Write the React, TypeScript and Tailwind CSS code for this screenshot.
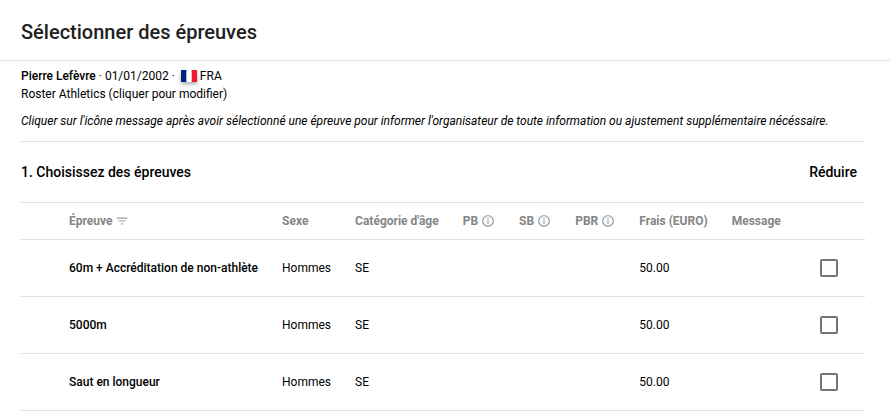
import { useState } from "react";
import { MdFilterList, MdInfoOutline } from "react-icons/md";

const events = [
  { id: "60m", name: "60m + Accréditation de non-athlète", gender: "Hommes", age: "SE", fee: "50.00" },
  { id: "5000m", name: "5000m", gender: "Hommes", age: "SE", fee: "50.00" },
  { id: "long-jump", name: "Saut en longueur", gender: "Hommes", age: "SE", fee: "50.00" },
];

const columns = [
  { label: "Épreuve", icon: "filter" },
  { label: "Sexe" },
  { label: "Catégorie d'âge" },
  { label: "PB", icon: "info" },
  { label: "SB", icon: "info" },
  { label: "PBR", icon: "info" },
  { label: "Frais (EURO)" },
  { label: "Message" },
];

function FrenchFlag() {
  return (
    <svg viewBox="0 0 16 12" className="h-3 w-4 shadow-[0_2px_4px_rgba(0,0,0,0.35)]" aria-hidden="true">
      <rect width="16" height="12" fill="#fff" />
      <rect width="5.33" height="12" fill="#00267f" />
      <rect x="10.67" width="5.33" height="12" fill="#f31830" />
    </svg>
  );
}

export default function App() {
  const [open, setOpen] = useState(true);
  const [selected, setSelected] = useState<string[]>([]);

  const toggle = (id: string) =>
    setSelected((prev) => (prev.includes(id) ? prev.filter((e) => e !== id) : [...prev, id]));

  return (
    <div className="bg-white font-[Roboto,sans-serif] text-xs text-black">
      <header className="border-b border-[#e0e0e0] px-[21px] pt-[18px] pb-3.5">
        <h1 className="text-xl leading-7 font-medium text-[#212121]">Sélectionner des épreuves</h1>
      </header>

      <main className="pr-[25px] pl-[21px]">
        {/* Athlete */}
        <section className="border-b border-[#e0e0e0] pt-1.5 pb-[11px] leading-[18px]">
          <div className="flex items-center">
            <p className="mr-1.5">
              <span className="font-medium">Pierre Lefèvre</span> · 01/01/2002 ·
            </p>
            <FrenchFlag />
            <span className="ml-[3px]">FRA</span>
          </div>
          <button type="button" className="block cursor-pointer">
            Roster Athletics (cliquer pour modifier)
          </button>
          <p className="mt-[9px] italic">
            Cliquer sur l'icône message après avoir sélectionné une épreuve pour informer l'organisateur de toute
            information ou ajustement supplémentaire nécéssaire.
          </p>
        </section>

        {/* Events */}
        <section>
          <div className="flex h-[60px] items-center justify-between pr-2 text-sm font-medium">
            <h2>1. Choisissez des épreuves</h2>
            <button type="button" aria-expanded={open} className="cursor-pointer" onClick={() => setOpen(!open)}>
              Réduire
            </button>
          </div>

          {open && (
            <table className="w-full border-t border-[#e0e0e0] text-left whitespace-nowrap">
              <thead>
                <tr className="h-[37px] border-b border-[#e0e0e0] text-[#858585]">
                  <td className="min-w-12 p-0" />
                  {columns.map((col) => (
                    <th key={col.label} scope="col" className="p-0 pr-6 font-bold">
                      <span className="flex items-center gap-[3px]">
                        {col.label}
                        {col.icon === "filter" && <MdFilterList className="size-[14px] text-[#9aa0a6]" />}
                        {col.icon === "info" && <MdInfoOutline className="size-[14px] text-[#8a9199]" />}
                      </span>
                    </th>
                  ))}
                  <td className="w-full p-0" />
                </tr>
              </thead>
              <tbody>
                {events.map((event) => (
                  <tr key={event.id} className="h-[57px] border-b border-[#e0e0e0]">
                    <td className="p-0" />
                    <td className="p-0 pr-6 font-medium">
                      <label htmlFor={event.id}>{event.name}</label>
                    </td>
                    <td className="p-0 pr-6">{event.gender}</td>
                    <td className="p-0 pr-6">{event.age}</td>
                    <td />
                    <td />
                    <td />
                    <td className="p-0 pr-6">{event.fee}</td>
                    <td />
                    <td className="p-0 pr-[27px]">
                      <input
                        id={event.id}
                        type="checkbox"
                        checked={selected.includes(event.id)}
                        onChange={() => toggle(event.id)}
                        className="ml-auto block size-[18px] appearance-none rounded-xs border-2 border-[#757575] checked:bg-[#757575]"
                      />
                    </td>
                  </tr>
                ))}
              </tbody>
            </table>
          )}
        </section>
      </main>
    </div>
  );
}
